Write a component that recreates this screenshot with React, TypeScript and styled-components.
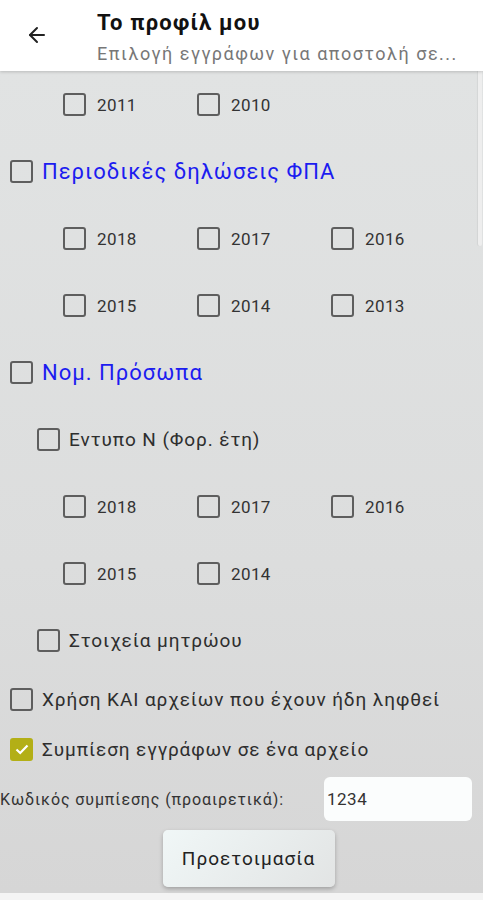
import React from "react";
import styled, { createGlobalStyle } from "styled-components";
import { ArrowLeft } from "lucide-react";

const GlobalStyle = createGlobalStyle`
  html, body {
    margin: 0;
    padding: 0;
    background: #f4f4f4;
    font-family: Roboto, "Noto Sans", sans-serif;
  }
  * { box-sizing: border-box; }
`;

type Level = 0 | 1;

const years1 = ["2011", "2010"];
const vatYears = ["2018", "2017", "2016", "2015", "2014", "2013"];
const legalYears = ["2018", "2017", "2016", "2015", "2014"];

const Checkbox = ({ checked }: { checked?: boolean }) => (
  <Box $checked={checked}>
    {checked && (
      <svg width="16" height="16" viewBox="0 0 16 16">
        <path d="M2.5 8.5 L6.2 12 L13.5 4.5" fill="none" stroke="#fff" strokeWidth="2.2" />
      </svg>
    )}
  </Box>
);

const YearGrid = ({ years }: { years: string[] }) => {
  const rows: string[][] = [];
  for (let i = 0; i < years.length; i += 3) rows.push(years.slice(i, i + 3));
  return (
    <>
      {rows.map((r, i) => (
        <YearRow key={i}>
          {r.map((y) => (
            <YearItem key={y}>
              <Checkbox />
              <YearLabel>{y}</YearLabel>
            </YearItem>
          ))}
        </YearRow>
      ))}
    </>
  );
};

const Option = ({ level, label, checked, blue, size }: { level: Level; label: string; checked?: boolean; blue?: boolean; size: number }) => (
  <OptionRow $level={level}>
    <Checkbox checked={checked} />
    <OptionLabel $blue={blue} $size={size}>{label}</OptionLabel>
  </OptionRow>
);

export default function App() {
  return (
    <>
      <GlobalStyle />
      <Page>
        <Header>
          <BackButton>
            <ArrowLeft size={24} strokeWidth={2} color="#222" />
          </BackButton>
          <Titles>
            <Title>Το προφίλ μου</Title>
            <Subtitle>Επιλογή εγγράφων για αποστολή σε...</Subtitle>
          </Titles>
        </Header>
        <Content>
          <ScrollThumb />
          <YearGrid years={years1} />
          <SectionRow>
            <Option level={0} label="Περιοδικές δηλώσεις ΦΠΑ" blue size={22} />
          </SectionRow>
          <YearGrid years={vatYears} />
          <SectionRow>
            <Option level={0} label="Νομ. Πρόσωπα" blue size={22} />
          </SectionRow>
          <SectionRow>
            <Option level={1} label="Εντυπο Ν (Φορ. έτη)" size={19} />
          </SectionRow>
          <YearGrid years={legalYears} />
          <SectionRow>
            <Option level={1} label="Στοιχεία μητρώου" size={19} />
          </SectionRow>
          <SmallRow>
            <Option level={0} label="Χρήση ΚΑΙ αρχείων που έχουν ήδη ληφθεί" size={19} />
          </SmallRow>
          <SmallRow>
            <Option level={0} label="Συμπίεση εγγράφων σε ένα αρχείο" checked size={19} />
          </SmallRow>
          <PasswordRow>
            <PasswordLabel>Κωδικός συμπίεσης (προαιρετικά):</PasswordLabel>
            <PasswordInput defaultValue="1234" />
          </PasswordRow>
          <ButtonRow>
            <PrepareButton>Προετοιμασία</PrepareButton>
          </ButtonRow>
        </Content>
      </Page>
    </>
  );
}

// Styled Components
const Page = styled.div`
  width: 483px;
  height: 900px;
  display: flex;
  flex-direction: column;
  overflow: hidden;
  background: #f4f4f4;
`;

const Header = styled.header`
  height: 71px;
  flex-shrink: 0;
  background: #fff;
  display: flex;
  align-items: flex-start;
  box-shadow: 0 1px 3px rgba(0, 0, 0, 0.18);
  position: relative;
  z-index: 1;
`;

const BackButton = styled.div`
  width: 97px;
  padding: 23px 0 0 25px;
`;

const Titles = styled.div`
  display: flex;
  flex-direction: column;
  padding-top: 8px;
  white-space: nowrap;
`;

const Title = styled.div`
  font-size: 22px;
  font-weight: 700;
  letter-spacing: 1.2px;
  color: #111;
  line-height: 30px;
`;

const Subtitle = styled.div`
  font-size: 18px;
  letter-spacing: 1.5px;
  color: #777;
  line-height: 32px;
`;

const Content = styled.main`
  position: relative;
  height: 822px;
  flex-shrink: 0;
  background: linear-gradient(#e1e3e3, #dcdddd 60%, #d6d6d6);
  display: flex;
  flex-direction: column;
`;

const ScrollThumb = styled.div`
  position: absolute;
  right: 1px;
  top: 0;
  width: 4px;
  height: 175px;
  border-radius: 0 0 3px 3px;
  background: #eeeeee;
  box-shadow: -1px 0 1px rgba(0, 0, 0, 0.06);
`;

const YearRow = styled.div`
  height: 67px;
  display: grid;
  grid-template-columns: repeat(3, 134px);
  align-items: center;
  padding-left: 63px;
  &:first-of-type {
    height: 65px;
  }
`;

const YearItem = styled.div`
  display: flex;
  align-items: center;
  gap: 11px;
`;

const YearLabel = styled.span`
  font-size: 17px;
  letter-spacing: 0.4px;
  color: #333;
`;

const Box = styled.span<{ $checked?: boolean }>`
  width: 23px;
  height: 23px;
  flex-shrink: 0;
  border-radius: 3px;
  border: 2px solid ${(p) => (p.$checked ? "#b3af16" : "#5e5e5e")};
  background: ${(p) => (p.$checked ? "#b3af16" : "transparent")};
  display: flex;
  align-items: center;
  justify-content: center;
`;

const SectionRow = styled.div`
  height: 67px;
  display: flex;
  align-items: center;
`;

const SmallRow = styled.div`
  height: 50px;
  display: flex;
  align-items: center;
`;

const OptionRow = styled.div<{ $level: Level }>`
  display: flex;
  align-items: center;
  gap: 9px;
  padding-left: ${(p) => (p.$level === 0 ? 10 : 37)}px;
  white-space: nowrap;
`;

const OptionLabel = styled.span<{ $blue?: boolean; $size: number }>`
  font-size: ${(p) => p.$size}px;
  letter-spacing: ${(p) => (p.$blue ? 1 : 0.9)}px;
  color: ${(p) => (p.$blue ? "#1c1cf0" : "#2e2e2e")};
`;

const PasswordRow = styled.div`
  height: 50px;
  display: flex;
  align-items: center;
  justify-content: space-between;
  padding-right: 11px;
`;

const PasswordLabel = styled.span`
  font-size: 16px;
  letter-spacing: 0.9px;
  color: #333;
  white-space: nowrap;
`;

const PasswordInput = styled.input`
  width: 148px;
  height: 44px;
  border: none;
  border-radius: 6px;
  background: #fbfdfd;
  font-family: Roboto, sans-serif;
  font-size: 17px;
  letter-spacing: 0.5px;
  color: #333;
  padding: 0 3px;
  outline: none;
`;

const ButtonRow = styled.div`
  display: flex;
  justify-content: center;
  padding: 6px 0 0 14px;
`;

const PrepareButton = styled.button`
  width: 172px;
  height: 57px;
  border: none;
  border-radius: 5px;
  background: linear-gradient(135deg, #f0f7f7, #e2e4e4);
  box-shadow: 0 2px 4px rgba(0, 0, 0, 0.25);
  font-family: Roboto, sans-serif;
  font-size: 19px;
  letter-spacing: 1px;
  color: #222;
`;
